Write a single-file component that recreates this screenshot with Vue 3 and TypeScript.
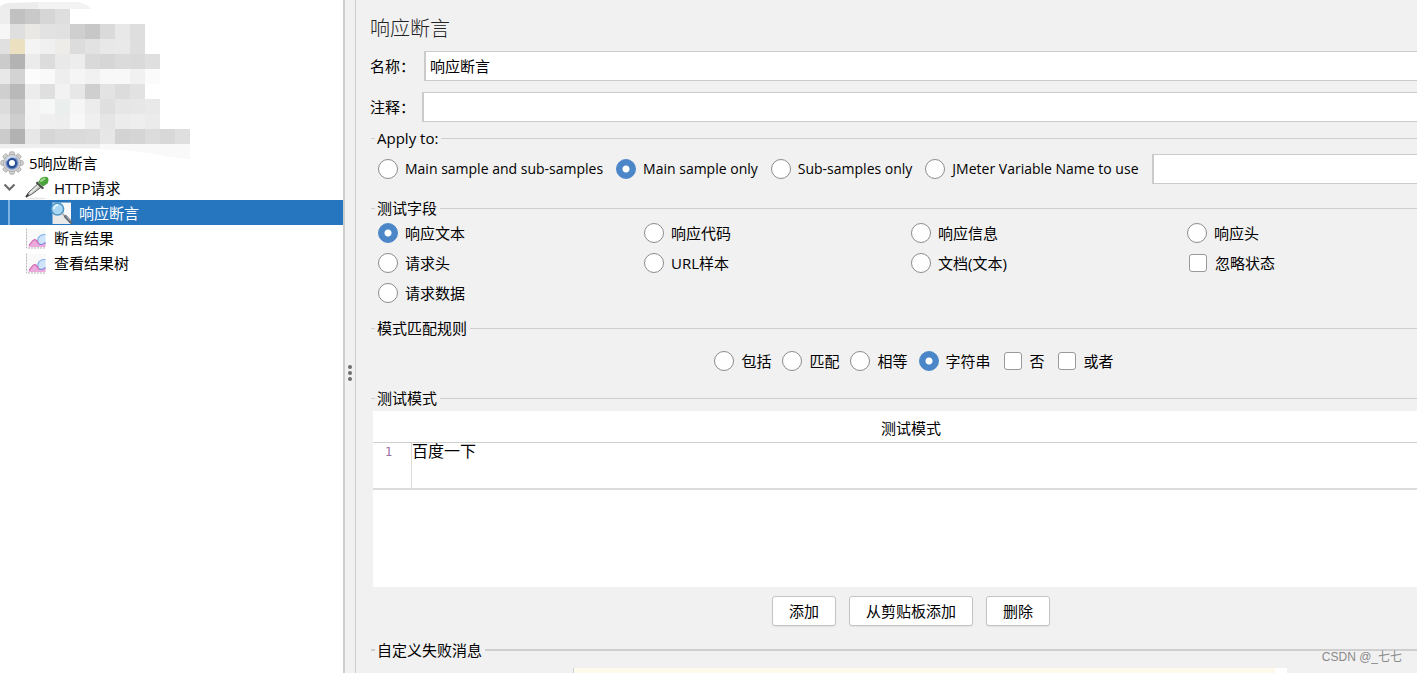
<script setup lang="ts">
import { ref } from 'vue'

interface Option { value: string; label: string }

const colStart = (i: number): number => (i === 0 ? 0 : 10 + (i - 1) * 15)
const mosaic: string[][] = [
  'ededed c1c1c1 c9c9c9 d6d6d6 dedede',
  'f6f6f6 dfdfdf e9e8e4 e2e2e2 e1e1e1 cfcfcf c7c7c7 dadada e8e8e8 dedede',
  'e0e0e0 ebe1c0 f4f4f4 f0f0f0 edece9 dcdcdc e2e2e2 e8e8e8 e9e9e9 dedede',
  'cbcbcb b3b3b3 ebebeb dcdcdc e9e9e9 ededed d9d9d9 d6d6d6 dbdbdb dadada dfdfdf',
  'e8e8e8 d3d3d3 fcfcfc f9f9f9 eeeeee f5f5f5 f1f1f1 f8f8f8 f8f8f8 f1f1f1 fbfbfb',
  'cfcfcf b9b9b9 ececec dfdfdf f2f2f2 e7e7e7 cfcfcf e3e3e3 dcdcdc e2e2e2',
  'dcdcdc c7c7c7 f4f4f4 f6f7f7 eaeeed f5f5f5 ececec dfdfdf e6e6e6 e7e7e7 e9e9e9',
  'e3e3e3 cecece f3f3f3 efefef eeeeee f8f8f8 efefef e5e5e5 ececec eeeeee ebebeb',
  'cbcbcb b2b2b2 e7e7e7 d6d6d6 dadada dadada dcdcdc e7e7e7 d3d3d3 d5d5d5 dcdcdc d8d8d8 dfdfdf',
].map((row) => row.split(' '))

const scopes: Option[] = [
  { value: 'all', label: 'Main sample and sub-samples' },
  { value: 'main', label: 'Main sample only' },
  { value: 'sub', label: 'Sub-samples only' },
  { value: 'variable', label: 'JMeter Variable Name to use' },
]
const fields: Option[] = [
  { value: 'text', label: '响应文本' },
  { value: 'code', label: '响应代码' },
  { value: 'message', label: '响应信息' },
  { value: 'headers', label: '响应头' },
  { value: 'reqHeaders', label: '请求头' },
  { value: 'url', label: 'URL样本' },
  { value: 'document', label: '文档(文本)' },
  { value: 'ignore', label: '忽略状态' },
  { value: 'reqData', label: '请求数据' },
]
const rules: Option[] = [
  { value: 'contains', label: '包括' },
  { value: 'matches', label: '匹配' },
  { value: 'equals', label: '相等' },
  { value: 'substring', label: '字符串' },
]

const name = ref('响应断言')
const comment = ref('')
const scope = ref('main')
const variable = ref('')
const field = ref('text')
const ignoreStatus = ref(false)
const rule = ref('substring')
const negate = ref(false)
const either = ref(false)
const pattern = ref('百度一下')
const failure = ref('')
</script>

<template>
  <div class="app">
    <aside class="sidebar">
      <svg class="mosaic" width="190" height="150" aria-hidden="true">
        <path d="M0 9V7Q3 3 10 3L38 2H75Q86 3 91 9Z" fill="#ececec" />
        <path d="M38 9V2H75Q86 3 91 9Z" fill="#f3f3f3" />
        <path d="M0 144H115L190 144V159Q172 158 160 155Q140 151 120 150Q60 147 0 149Z" fill="#f9f9f9" />
        <path d="M0 144H100V148H0Z" fill="#eeefee" />
        <g v-for="(row, r) in mosaic" :key="r">
          <rect
            v-for="(c, i) in row"
            :key="i"
            :x="colStart(i)"
            :y="9 + r * 15"
            :width="i === 0 ? 10 : 15"
            height="15"
            :fill="'#' + c"
            shape-rendering="crispEdges"
          />
        </g>
      </svg>
      <ul class="tree">
        <li class="node root">
          <svg width="24" height="24" viewBox="0 0 24 24" aria-hidden="true">
            <g fill="#d2d2d0" stroke="#9a9a9a" stroke-width=".7">
              <rect v-for="a in 8" :key="a" x="9.6" y=".8" width="4.8" height="5" rx="1.4" :transform="`rotate(${a * 45} 12 12)`" />
            </g>
            <circle cx="12" cy="12" r="8.6" fill="#cfd1d4" stroke="#a3a3a3" stroke-width=".7" />
            <circle cx="12" cy="12" r="6.7" fill="#7f9dcd" />
            <circle cx="12" cy="12.3" r="5.2" fill="#2d4f95" />
            <circle cx="12" cy="12" r="3" fill="#fff" />
            <path d="M6.5 9.5a6.4 6.4 0 0 1 9-3" stroke="#d7e2f4" stroke-width="1.4" fill="none" />
          </svg>
          <span>5响应断言</span>
        </li>
        <li class="node request">
          <svg class="arrow" width="13" height="9" viewBox="0 0 13 9" aria-hidden="true">
            <path d="M1.5 1.5l5 5 5-5" fill="none" stroke="#6b6b6b" stroke-width="2.2" />
          </svg>
          <svg width="24" height="24" viewBox="0 0 24 24" aria-hidden="true">
            <ellipse cx="11" cy="22.5" rx="10" ry="1" fill="#e8e8e8" />
            <path d="M1 21l2-4L13 7.8l3.4 3.2L6.5 18.5z" fill="#c3c8c5" stroke="#5c5f5d" stroke-width="1" stroke-linejoin="round" />
            <path d="M5 17L13.5 9.3" stroke="#f1f4f2" stroke-width="1.3" />
            <path d="M1 21l2.4-2.6" stroke="#333" stroke-width="1.6" />
            <path d="M12.2 6.8l5.4 5.2" stroke="#4a5548" stroke-width="2.4" stroke-linecap="round" />
            <path d="M13.2 6L16 2Q20-.2 22.8 1.6Q24.3 4 22.6 7.4L18 10.6z" fill="#4ba43b" />
            <path d="M16 5l3.4-2.4" stroke="#a5dd90" stroke-width="2" stroke-linecap="round" />
          </svg>
          <span>HTTP请求</span>
        </li>
        <li class="node selected">
          <svg width="24" height="24" viewBox="0 0 24 24" aria-hidden="true">
            <path d="M2.5 1.5H21V23H2.5z" fill="#e9e9e9" />
            <path d="M9 2H21V20L9 12z" fill="#f8f8f8" />
            <circle cx="7.5" cy="8" r="6.1" fill="#a9d6f3" stroke="#4a94c4" stroke-width="1.5" />
            <path d="M4 8a4 4 0 0 1 4-4" fill="none" stroke="#e5f6ff" stroke-width="1.8" />
            <path d="M12.2 12.5l3 3" stroke="#b5b5b5" stroke-width="2" />
            <path d="M15.5 15.5l5.3 5.6" stroke="#5a6570" stroke-width="3" stroke-linecap="round" />
            <path d="M16 15.4l4.6 4.8" stroke="#c3c8cc" stroke-width="1" />
          </svg>
          <span>响应断言</span>
        </li>
        <li v-for="item in ['断言结果', '查看结果树']" :key="item" class="node listener">
          <svg width="24" height="24" viewBox="0 0 24 24" aria-hidden="true">
            <path d="M2 3H21V22H2z" fill="#f9f9f9" />
            <path d="M20.5 8.5Q14 8.5 13 13V20H20.5z" fill="#cfe4fb" />
            <path d="M20.5 8.5Q14 8.5 13 13V16" fill="none" stroke="#7fb0ea" stroke-width="1.2" />
            <path d="M4 21V19Q5.500 17.500 7 15.500Q9 12.500 11.500 14.500Q12.500 16.500 14 18Q17 19.500 20.500 16.500V21z" fill="#eba9dc" />
            <path d="M4 19.500Q5.500 17.500 7 15.500Q9 12.500 11.500 14.500Q12.500 16.500 14 18" fill="none" stroke="#d062b2" stroke-width="1.200" />
            <path d="M14 18Q17 19.500 20.500 16.500" fill="none" stroke="#7d86d6" stroke-width="1.200" />
            <path d="M1.500 2.500V22H21" fill="none" stroke="#b5b5b5" stroke-dasharray="2 1" />
          </svg>
          <span>{{ item }}</span>
        </li>
      </ul>
    </aside>

    <div class="splitter" role="separator" aria-orientation="vertical">
      <i></i><i></i><i></i>
    </div>

    <main class="panel">
      <form class="content" @submit.prevent>
        <h1>响应断言</h1>
        <div class="line name-line">
          <label for="name">名称：</label>
          <input id="name" v-model="name" class="box" type="text" />
        </div>
        <div class="line comment-line">
          <label for="comment">注释：</label>
          <input id="comment" v-model="comment" class="box" type="text" />
        </div>

        <fieldset class="apply">
          <legend>Apply to:</legend>
          <div class="row">
            <label v-for="o in scopes" :key="o.value" class="choice">
              <input v-model="scope" type="radio" name="scope" :value="o.value" />{{ o.label }}
            </label>
            <input v-model="variable" class="box" type="text" aria-label="JMeter Variable Name to use" />
          </div>
        </fieldset>

        <fieldset class="fields">
          <legend>测试字段</legend>
          <div class="grid">
            <template v-for="o in fields" :key="o.value">
              <label v-if="o.value === 'ignore'" class="choice">
                <input v-model="ignoreStatus" type="checkbox" />{{ o.label }}
              </label>
              <label v-else class="choice">
                <input v-model="field" type="radio" name="field" :value="o.value" />{{ o.label }}
              </label>
            </template>
          </div>
        </fieldset>

        <fieldset class="rules">
          <legend>模式匹配规则</legend>
          <div class="row">
            <label v-for="o in rules" :key="o.value" class="choice">
              <input v-model="rule" type="radio" name="rule" :value="o.value" />{{ o.label }}
            </label>
            <label class="choice"><input v-model="negate" type="checkbox" />否</label>
            <label class="choice"><input v-model="either" type="checkbox" />或者</label>
          </div>
        </fieldset>

        <fieldset class="patterns">
          <legend>测试模式</legend>
          <div class="table-area">
            <table>
              <thead>
                <tr><th colspan="2">测试模式</th></tr>
              </thead>
              <tbody>
                <tr>
                  <td class="num">1</td>
                  <td><textarea v-model="pattern" rows="1" aria-label="测试模式"></textarea></td>
                </tr>
              </tbody>
            </table>
          </div>
          <div class="buttons">
            <button type="button">添加</button>
            <button type="button">从剪贴板添加</button>
            <button type="button">删除</button>
          </div>
        </fieldset>

        <fieldset class="failure">
          <legend>自定义失败消息</legend>
          <textarea v-model="failure" aria-label="自定义失败消息"></textarea>
        </fieldset>
      </form>
    </main>
    <div class="watermark">CSDN @_七七</div>
  </div>
</template>

<style>
body {
  margin: 0;
  overflow: hidden;
}
</style>

<style scoped>
.app {
  position: relative;
  display: flex;
  height: 100vh;
  overflow: hidden;
  background: #f1f1f1;
  color: #000;
  font: 15px/20px "Open Sans", "Noto Sans CJK SC", sans-serif;
}
* {
  box-sizing: border-box;
}
input,
textarea,
button {
  font: inherit;
  color: inherit;
  margin: 0;
}
.sidebar {
  flex: 0 0 343px;
  background: #fff;
}
.mosaic {
  display: block;
  overflow: visible;
}
.tree {
  position: relative;
  list-style: none;
  margin: 0;
  padding: 0;
}
.node {
  display: flex;
  align-items: center;
  gap: 5px;
  height: 25px;
  white-space: nowrap;
}
.node svg {
  flex: none;
}
.request {
  padding-left: 3px;
}
.request .arrow {
  margin-right: 4px;
}
.selected {
  background: linear-gradient(#7db4e6, #7db4e6) 8px 0 / 2px 100% no-repeat #2675bf;
  color: #fff;
  padding-left: 50px;
}
.listener {
  padding-left: 25px;
}
.splitter {
  flex: 0 0 13px;
  display: flex;
  flex-direction: column;
  align-items: center;
  justify-content: center;
  gap: 2px;
  padding-top: 72px;
  border-left: 2px solid #cdcdcd;
  border-right: 1px solid #cdcdcd;
}
.splitter i {
  width: 4px;
  height: 4px;
  border-radius: 50%;
  background: #6e6e6e;
}
.panel {
  flex: 1;
  min-width: 0;
  overflow: hidden;
}
.content {
  margin-right: -32px;
  padding: 12px 0 0 14px;
}
h1 {
  margin: 0 0 7px;
  font: 300 20px/32px "Noto Sans CJK SC", sans-serif;
  color: #222;
}
.line {
  display: flex;
  align-items: center;
}
.name-line {
  gap: 9px;
  margin-bottom: 11px;
}
.comment-line {
  gap: 7px;
  margin-bottom: 6px;
}
.box {
  flex: 1;
  min-width: 0;
  height: 30px;
  padding: 0 4px 1px;
  border: 2px solid #cbcbcb;
  border-top-width: 1px;
  border-bottom-width: 1px;
  background: #fff;
  outline: none;
}
fieldset {
  min-width: 0;
  margin: 0 0 0 1px;
  padding: 0 0 0 4px;
  border: 0;
  border-top: 1px solid #cfcfcf;
}
legend {
  height: 20px;
  padding: 0 3px 0 2px;
}
.row {
  display: flex;
  align-items: center;
  gap: 11px;
}
.choice {
  display: flex;
  align-items: center;
  gap: 7px;
  white-space: nowrap;
}
.choice input {
  appearance: none;
  flex: none;
  width: 20px;
  height: 20px;
  border: 1px solid #8c8c8c;
  border-radius: 50%;
  background: #fff;
}
.choice input[type="radio"]:checked {
  border-color: #4a86c8;
  background: radial-gradient(circle, #fff 2px, #fff 3px, #4a86c8 4px, #4a86c8 100%);
}
.choice input[type="checkbox"] {
  width: 18px;
  height: 18px;
  margin: 0 1px 0 2px;
  border: 1px solid #999;
  border-radius: 3px;
}
.choice input[type="checkbox"]:checked {
  background: #4a86c8;
}
.apply .row {
  gap: 13px;
  padding: 6px 0 14px 3px;
}
.apply .choice {
  font-size: 14px;
}
.grid {
  display: grid;
  grid-template-columns: 266fr 267fr 276fr 262fr;
  grid-auto-rows: 30px;
  padding: 0 0 10px 3px;
}
.rules .row {
  justify-content: center;
  height: 50px;
  padding: 0 0 4px 4px;
}
.patterns {
  padding-left: 2px;
}
.patterns legend,
.failure legend {
  margin-left: 2px;
}
.table-area {
  margin-top: 3px;
  min-height: 176px;
  background: #fff;
}
table {
  width: 100%;
  border-collapse: separate;
  border-spacing: 0;
}
th {
  height: 32px;
  padding: 2px 0 0;
  font-weight: 400;
  border-bottom: 1px solid #cfcfcf;
}
td {
  height: 47px;
  padding: 0;
  vertical-align: top;
  border-bottom: 2px solid #dcdcdc;
}
.num {
  width: 39px;
  padding-left: 12px;
  border-right: 1px solid #dcdcdc;
  font: 12px/18px "DejaVu Sans Mono", monospace;
  color: #9a6fa5;
}
td textarea {
  display: block;
  width: 100%;
  height: 44px;
  padding: 0;
  border: 0;
  outline: none;
  resize: none;
  overflow: hidden;
  font: 16px/14px "Noto Sans CJK SC", sans-serif;
}
.buttons {
  display: flex;
  justify-content: center;
  gap: 13px;
  padding: 9px 0 14px;
}
button {
  height: 30px;
  padding: 0 16px;
  border: 1px solid #c4c4c4;
  border-radius: 3px;
  background: #fff;
  box-shadow: 0 1px 1px #e2e2e2;
}
.failure {
  padding-left: 2px;
  border-top: 2px solid #cfcfcf;
}
.failure textarea {
  display: block;
  width: calc(100% - 362px);
  height: 80px;
  margin: 8px 0 0 200px;
  padding: 0;
  border: 0;
  border-left: 1px solid #cfcfcf;
  border-right: 12px solid #fff;
  background: #fdfaeb;
  outline: none;
  resize: none;
}
.watermark {
  position: absolute;
  right: 15px;
  bottom: 6px;
  font: 12px/20px "Liberation Sans", "Noto Sans CJK SC", sans-serif;
  color: #8a8a8a;
}
</style>
